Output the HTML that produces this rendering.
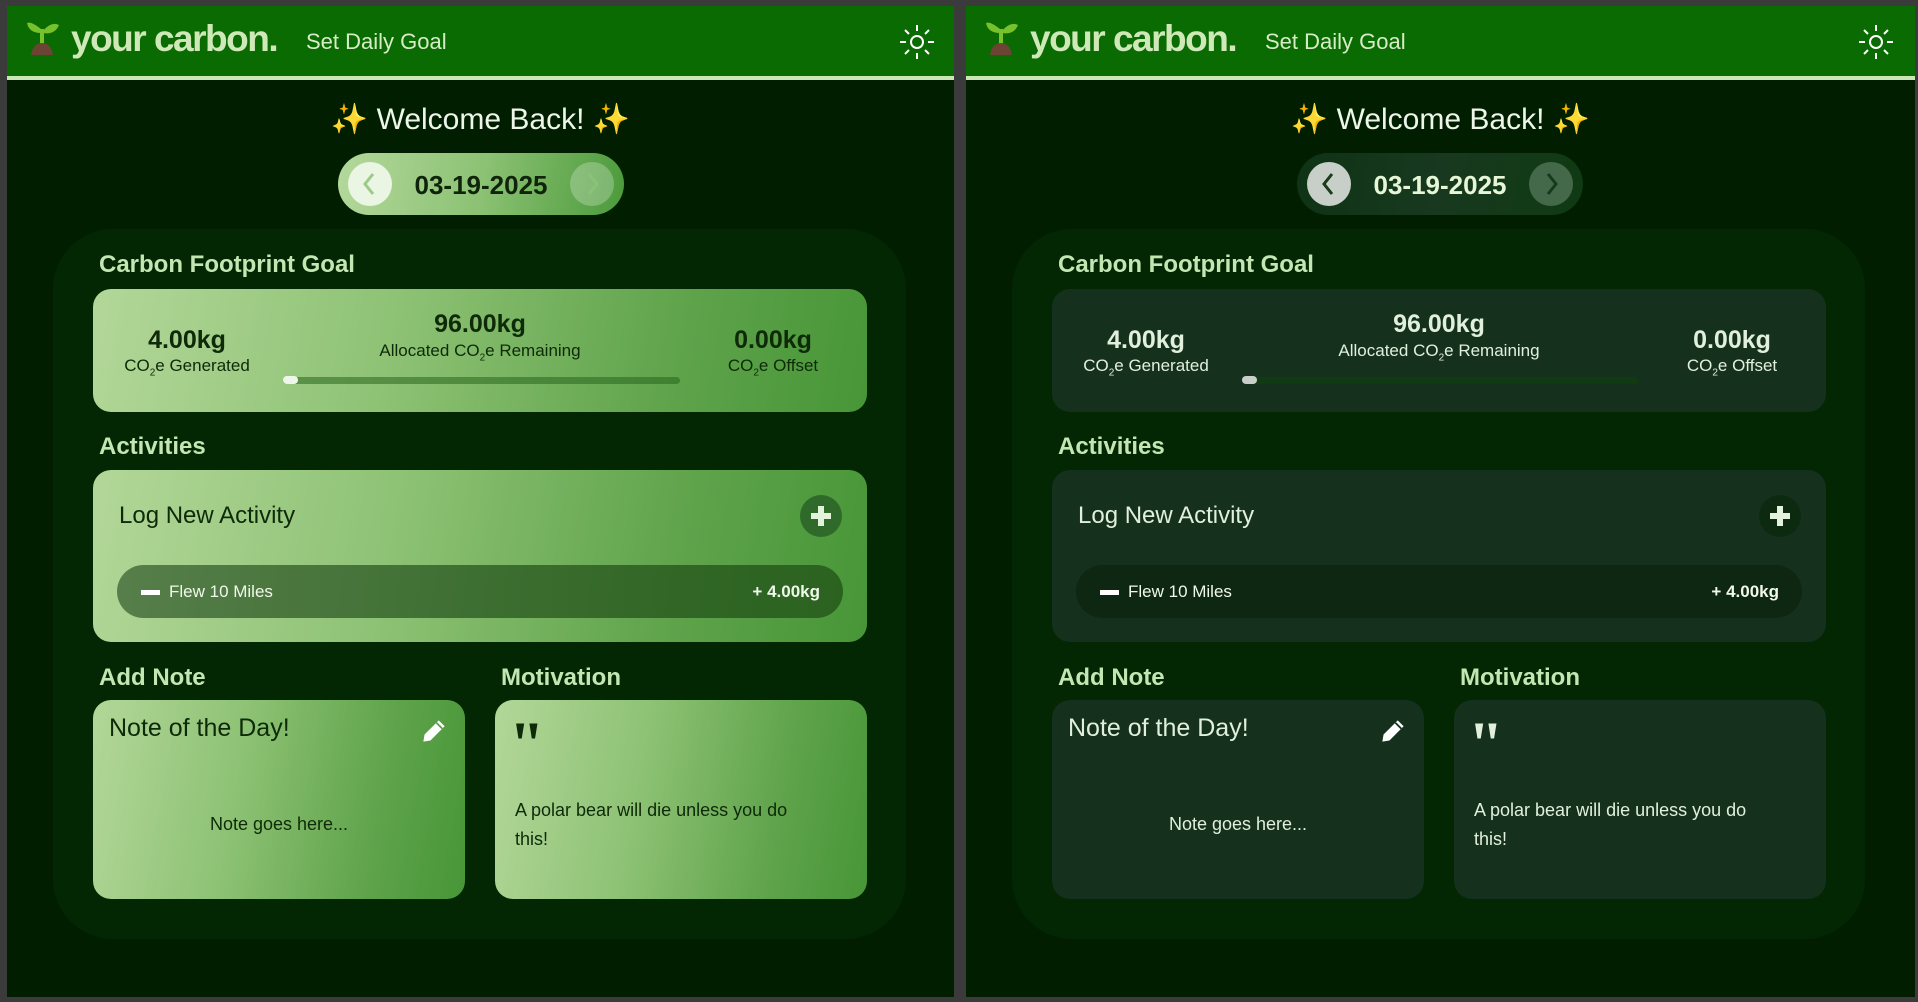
<!DOCTYPE html>
<html><head><meta charset="utf-8"><style>
*{margin:0;padding:0;box-sizing:border-box}
body{width:1918px;height:1002px;background:#3b3b3b;font-family:"Liberation Sans",sans-serif;position:relative;overflow:hidden}
.panel{position:absolute;top:6px;height:991px;background:#011f00;overflow:hidden}
.p1{left:7px;width:947px}
.p2{left:966px;width:949px}
.abs{position:absolute}
.hdr{left:0;top:0;width:100%;height:70px;background:#0a6b02}
.hline{left:0;top:70px;width:100%;height:4px;background:#c9e6b4}
.logo{left:64px;top:12px;font-size:37px;font-weight:bold;color:#cfe8b8;letter-spacing:-1.5px}
.sdg{left:299px;top:23px;font-size:22px;color:#d6ecc6}
.welcome{left:0;width:100%;top:96px;text-align:center;font-size:30px;color:#eef6ea}
.pill{left:331px;top:147px;width:286px;height:62px;border-radius:31px}
.btn{position:absolute;top:9px;width:44px;height:44px;border-radius:50%}
.date{position:absolute;left:0;width:100%;top:17px;text-align:center;font-size:26px;font-weight:bold}
.main{left:46px;top:223px;width:853px;height:710px;border-radius:60px;background:#022702}
.h{font-size:24px;font-weight:bold;color:#c4e6b2}
.card{border-radius:18px}
.val{font-size:25px;font-weight:bold;text-align:center;width:240px}
.lbl{font-size:17px;text-align:center;width:300px}
sub{font-size:10px}
.p1 .g{background:linear-gradient(100deg,#b3d799 0%,#8cc173 40%,#5fa34b 75%,#479637 100%)}
.p1 .txt{color:#0e2a08}
.p2 .g{background:#15301d}
.p2 .txt{color:#e0f0dc}
.q{font-size:64px;font-weight:bold;font-family:"Liberation Serif",serif;line-height:1}
.mot{left:508px;top:790px;width:290px;font-size:18px;line-height:29px}
</style></head><body>

<!-- LEFT PANEL -->
<div class="panel p1">
 <div class="abs hdr"></div><div class="abs hline"></div>
 <svg class="abs" style="left:18px;top:13px" width="36" height="36" viewBox="0 0 36 36"><path d="M16 10 Q6 2 2 4 Q4 14 16 14Z" fill="#77c22c"/><path d="M18 12 Q26 2 34 6 Q30 16 18 14Z" fill="#77c22c"/><rect x="15" y="10" width="4" height="18" fill="#77c22c"/><path d="M6 36 Q8 24 17 24 Q26 24 28 36Z" fill="#6b4434"/></svg>
 <div class="abs logo">your carbon.</div>
 <div class="abs sdg">Set Daily Goal</div>
 <svg class="abs" style="left:891px;top:17px" width="38" height="38" viewBox="0 0 38 38" stroke="#fff" stroke-width="2" fill="none"><circle cx="19" cy="19" r="6"/><path d="M19 2v6M19 30v6M2 19h6M30 19h6M7 7l4 4M27 27l4 4M31 7l-4 4M11 27l-4 4"/></svg>
 <div class="abs welcome">✨ Welcome Back! ✨</div>
 <div class="abs pill" style="background:linear-gradient(100deg,#b4d89c,#8cc274 50%,#4b9a3b)">
  <div class="btn" style="left:10px;background:#eaf5e4"></div>
  <svg class="abs" style="left:21px;top:18px" width="22" height="26"><path d="M14 3L6 13l8 10" stroke="#9ccb87" stroke-width="3" fill="none"/></svg>
  <div class="btn" style="left:232px;background:rgba(255,255,255,.25)"></div>
  <svg class="abs" style="left:243px;top:18px" width="22" height="26"><path d="M8 3l8 10-8 10" stroke="#8bc27a" stroke-width="3" fill="none"/></svg>
  <div class="date" style="color:#10240c">03-19-2025</div>
 </div>
 <div class="abs main"></div>
 <div class="abs h" style="left:92px;top:245px">Carbon Footprint Goal</div>
 <div class="abs card g" style="left:86px;top:283px;width:774px;height:123px"></div>
 <div class="abs val txt" style="left:60px;top:320px">4.00kg</div>
 <div class="abs lbl txt" style="left:30px;top:350px">CO<sub>2</sub>e Generated</div>
 <div class="abs val txt" style="left:353px;top:304px">96.00kg</div>
 <div class="abs lbl txt" style="left:323px;top:335px">Allocated CO<sub>2</sub>e Remaining</div>
 <div class="abs" style="left:276px;top:371px;width:397px;height:7px;border-radius:4px;background:rgba(40,100,30,.55)"></div>
 <div class="abs" style="left:276px;top:370px;width:15px;height:8px;border-radius:4px;background:#eef6ea"></div>
 <div class="abs val txt" style="left:646px;top:320px">0.00kg</div>
 <div class="abs lbl txt" style="left:616px;top:350px">CO<sub>2</sub>e Offset</div>
 <div class="abs h" style="left:92px;top:427px">Activities</div>
 <div class="abs card g" style="left:86px;top:464px;width:774px;height:172px"></div>
 <div class="abs txt" style="left:112px;top:496px;font-size:24px">Log New Activity</div>
 <div class="abs" style="left:793px;top:489px;width:42px;height:42px;border-radius:50%;background:#2f6a2a"></div>
 <div class="abs" style="left:804px;top:507px;width:20px;height:6px;background:#e3f2dc"></div>
 <div class="abs" style="left:811px;top:500px;width:6px;height:20px;background:#e3f2dc"></div>
 <div class="abs" style="left:110px;top:559px;width:726px;height:53px;border-radius:27px;background:linear-gradient(90deg,rgba(40,80,35,.65),rgba(35,85,25,.8))"></div>
 <div class="abs" style="left:134px;top:584px;width:19px;height:5px;background:#fff"></div>
 <div class="abs" style="left:162px;top:576px;font-size:17px;color:#f0f8ec">Flew 10 Miles</div>
 <div class="abs" style="left:613px;width:200px;text-align:right;top:576px;font-size:17px;font-weight:bold;color:#f0f8ec">+ 4.00kg</div>
 <div class="abs h" style="left:92px;top:658px">Add Note</div>
 <div class="abs h" style="left:494px;top:658px">Motivation</div>
 <div class="abs card g" style="left:86px;top:694px;width:372px;height:199px"></div>
 <div class="abs card g" style="left:488px;top:694px;width:372px;height:199px"></div>
 <div class="abs txt" style="left:102px;top:708px;font-size:25px">Note of the Day!</div>
 <svg class="abs" style="left:414px;top:712px" width="26" height="26" viewBox="0 0 22 22"><path d="M2 20l1-6L15 2l5 5L8 19z" fill="#fff"/><path d="M13 4l5 5" stroke="#5aa146" stroke-width="1.5"/></svg>
 <div class="abs txt" style="left:86px;width:372px;text-align:center;top:808px;font-size:18px">Note goes here...</div>
 <div class="abs txt q" style="left:502px;top:706px">"</div>
 <div class="abs txt mot">A polar bear will die unless you do this!</div>
</div>

<!-- RIGHT PANEL -->
<div class="panel p2">
 <div class="abs hdr"></div><div class="abs hline"></div>
 <svg class="abs" style="left:18px;top:13px" width="36" height="36" viewBox="0 0 36 36"><path d="M16 10 Q6 2 2 4 Q4 14 16 14Z" fill="#77c22c"/><path d="M18 12 Q26 2 34 6 Q30 16 18 14Z" fill="#77c22c"/><rect x="15" y="10" width="4" height="18" fill="#77c22c"/><path d="M6 36 Q8 24 17 24 Q26 24 28 36Z" fill="#6b4434"/></svg>
 <div class="abs logo">your carbon.</div>
 <div class="abs sdg">Set Daily Goal</div>
 <svg class="abs" style="left:891px;top:17px" width="38" height="38" viewBox="0 0 38 38" stroke="#fff" stroke-width="2" fill="none"><circle cx="19" cy="19" r="6"/><path d="M19 2v6M19 30v6M2 19h6M30 19h6M7 7l4 4M27 27l4 4M31 7l-4 4M11 27l-4 4"/></svg>
 <div class="abs welcome">✨ Welcome Back! ✨</div>
 <div class="abs pill" style="background:linear-gradient(100deg,#0f3315,#18391f 50%,#0f3a12)">
  <div class="btn" style="left:10px;background:#c8cfc8"></div>
  <svg class="abs" style="left:21px;top:18px" width="22" height="26"><path d="M14 3L6 13l8 10" stroke="#1a3a1a" stroke-width="3" fill="none"/></svg>
  <div class="btn" style="left:232px;background:#44684a"></div>
  <svg class="abs" style="left:243px;top:18px" width="22" height="26"><path d="M8 3l8 10-8 10" stroke="#163a1a" stroke-width="3" fill="none"/></svg>
  <div class="date" style="color:#e6f6d6">03-19-2025</div>
 </div>
 <div class="abs main"></div>
 <div class="abs h" style="left:92px;top:245px">Carbon Footprint Goal</div>
 <div class="abs card g" style="left:86px;top:283px;width:774px;height:123px"></div>
 <div class="abs val txt" style="left:60px;top:320px">4.00kg</div>
 <div class="abs lbl txt" style="left:30px;top:350px">CO<sub>2</sub>e Generated</div>
 <div class="abs val txt" style="left:353px;top:304px">96.00kg</div>
 <div class="abs lbl txt" style="left:323px;top:335px">Allocated CO<sub>2</sub>e Remaining</div>
 <div class="abs" style="left:276px;top:371px;width:397px;height:7px;border-radius:4px;background:#0f3a12"></div>
 <div class="abs" style="left:276px;top:370px;width:15px;height:8px;border-radius:4px;background:#c8cfc8"></div>
 <div class="abs val txt" style="left:646px;top:320px">0.00kg</div>
 <div class="abs lbl txt" style="left:616px;top:350px">CO<sub>2</sub>e Offset</div>
 <div class="abs h" style="left:92px;top:427px">Activities</div>
 <div class="abs card g" style="left:86px;top:464px;width:774px;height:172px"></div>
 <div class="abs txt" style="left:112px;top:496px;font-size:24px">Log New Activity</div>
 <div class="abs" style="left:793px;top:489px;width:42px;height:42px;border-radius:50%;background:#0c2a10"></div>
 <div class="abs" style="left:804px;top:507px;width:20px;height:6px;background:#e3f2dc"></div>
 <div class="abs" style="left:811px;top:500px;width:6px;height:20px;background:#e3f2dc"></div>
 <div class="abs" style="left:110px;top:559px;width:726px;height:53px;border-radius:27px;background:#0e2712"></div>
 <div class="abs" style="left:134px;top:584px;width:19px;height:5px;background:#fff"></div>
 <div class="abs" style="left:162px;top:576px;font-size:17px;color:#f0f8ec">Flew 10 Miles</div>
 <div class="abs" style="left:613px;width:200px;text-align:right;top:576px;font-size:17px;font-weight:bold;color:#f0f8ec">+ 4.00kg</div>
 <div class="abs h" style="left:92px;top:658px">Add Note</div>
 <div class="abs h" style="left:494px;top:658px">Motivation</div>
 <div class="abs card g" style="left:86px;top:694px;width:372px;height:199px"></div>
 <div class="abs card g" style="left:488px;top:694px;width:372px;height:199px"></div>
 <div class="abs txt" style="left:102px;top:708px;font-size:25px">Note of the Day!</div>
 <svg class="abs" style="left:414px;top:712px" width="26" height="26" viewBox="0 0 22 22"><path d="M2 20l1-6L15 2l5 5L8 19z" fill="#fff"/><path d="M13 4l5 5" stroke="#15301d" stroke-width="1.5"/></svg>
 <div class="abs txt" style="left:86px;width:372px;text-align:center;top:808px;font-size:18px">Note goes here...</div>
 <div class="abs txt q" style="left:502px;top:706px">"</div>
 <div class="abs txt mot">A polar bear will die unless you do this!</div>
</div>
</body></html>
